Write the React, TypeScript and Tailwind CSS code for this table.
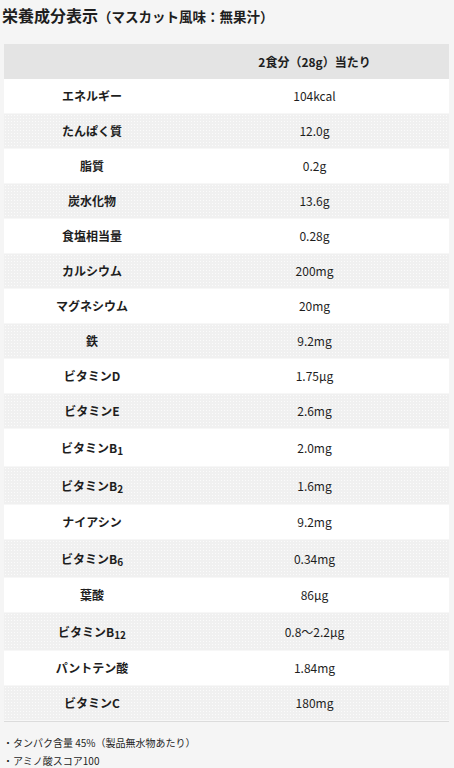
import React from 'react';

interface Row {
    label: React.ReactNode;
    value: string;
    tall?: boolean;
}

const B = (n: string) => (
    <>
        ビタミンB<sub className="text-[10px] relative top-[2px]">{n}</sub>
    </>
);

const rows: Row[] = [
    { label: 'エネルギー', value: '104kcal' },
    { label: 'たんぱく質', value: '12.0g' },
    { label: '脂質', value: '0.2g' },
    { label: '炭水化物', value: '13.6g' },
    { label: '食塩相当量', value: '0.28g' },
    { label: 'カルシウム', value: '200mg' },
    { label: 'マグネシウム', value: '20mg' },
    { label: '鉄', value: '9.2mg' },
    { label: 'ビタミンD', value: '1.75μg' },
    { label: 'ビタミンE', value: '2.6mg' },
    { label: B('1'), value: '2.0mg', tall: true },
    { label: B('2'), value: '1.6mg', tall: true },
    { label: 'ナイアシン', value: '9.2mg' },
    { label: B('6'), value: '0.34mg', tall: true },
    { label: '葉酸', value: '86μg' },
    { label: B('12'), value: '0.8〜2.2μg', tall: true },
    { label: 'パントテン酸', value: '1.84mg' },
    { label: 'ビタミンC', value: '180mg' },
];

export default function App() {
    return (
        <div
            className="min-h-[768px] bg-[#f5f5f5] text-[#1e1e1e] pt-[3px]"
            style={{ fontFamily: '"Noto Sans CJK JP", "Noto Sans", sans-serif' }}
        >
            <h1 className="px-[2px] font-bold leading-6 text-[16px]">
                栄養成分表示<span className="text-[13.5px]">（マスカット風味：無果汁）</span>
            </h1>

            <div className="mt-4 mx-[4px] w-[445px] border-b border-[#dcdcdc]">
                <div className="grid grid-cols-[176px_1fr] h-[35px] items-center bg-[#e4e4e4] text-[12px] font-bold">
                    <div />
                    <div className="text-center">2食分（28g）当たり</div>
                </div>
                {rows.map((r, i) => (
                    <div
                        key={i}
                        className={
                            'grid grid-cols-[176px_1fr] items-center text-[12px] border-b border-[#f7f7f7] ' +
                            (r.tall ? 'h-[38px] ' : 'h-[35px] ') +
                            (i % 2 === 0
                                ? 'bg-white'
                                : 'bg-[#f0f0f0] bg-[radial-gradient(#fbfbfb_0.8px,transparent_0.9px)] bg-[length:3px_3px]')
                        }
                    >
                        <div className="text-center font-bold">{r.label}</div>
                        <div className="text-center">{r.value}</div>
                    </div>
                ))}
            </div>

            <ul className="mt-3 px-[3px] text-[10px] leading-[18px]">
                <li>・タンパク含量 45%（製品無水物あたり）</li>
                <li>・アミノ酸スコア100</li>
            </ul>
        </div>
    );
}
